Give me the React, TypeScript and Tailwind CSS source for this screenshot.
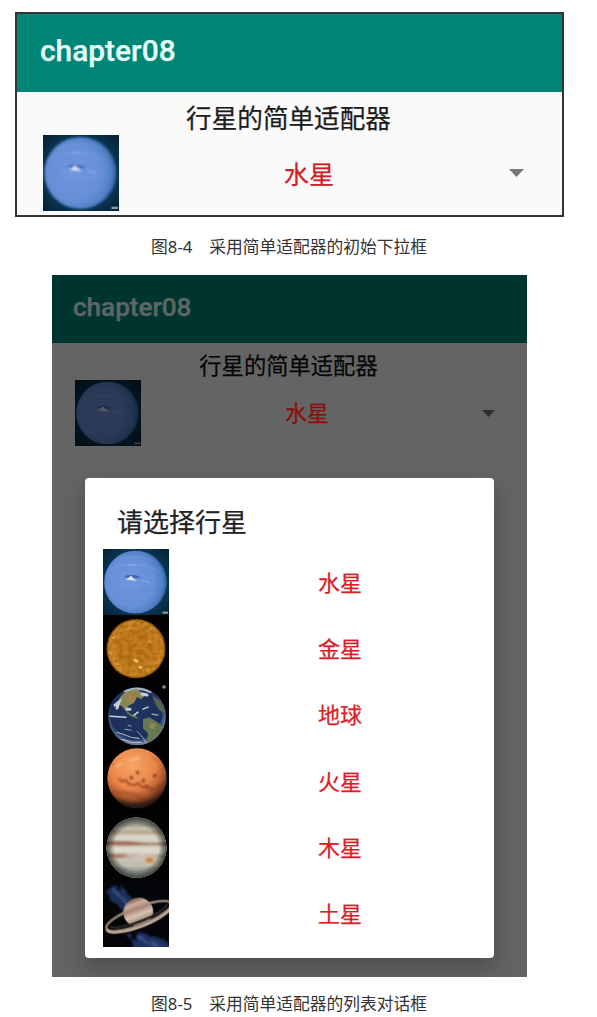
import React from "react";

const ROBOTO = "font-['Roboto','Noto_Sans_CJK_SC',sans-serif]";

function Neptune({ className }: { className: string }) {
  return (
    <svg viewBox="0 0 66 66" className={className} preserveAspectRatio="none">
      <defs>
        <radialGradient id="nepBg" cx="0.5" cy="0.5" r="0.7">
          <stop offset="0.6" stopColor="#0b3a5c" />
          <stop offset="1" stopColor="#051f30" />
        </radialGradient>
        <radialGradient id="nep" cx="0.42" cy="0.5" r="0.58">
          <stop offset="0" stopColor="#7296dd" />
          <stop offset="0.65" stopColor="#6790d8" />
          <stop offset="0.88" stopColor="#5080c4" />
          <stop offset="1" stopColor="#2e5f99" />
        </radialGradient>
        <filter id="soft1" x="-30%" y="-30%" width="160%" height="160%">
          <feGaussianBlur stdDeviation="0.7" />
        </filter>
      </defs>
      <rect width="66" height="66" fill="url(#nepBg)" />
      <circle cx="32.5" cy="33" r="31.3" fill="url(#nep)" filter="url(#soft1)" />
      <g filter="url(#soft1)" fill="none">
        <path d="M8 20Q30 9 56 22M12 12Q32 3 50 12" stroke="#8babe4" strokeWidth="1.2" opacity="0.3" />
        <path d="M21 27Q30 24 38 28Q32 30 25 29Z" fill="#3c5ca2" opacity="0.75" />
        <path d="M23 30.5L34 31.5L31 29.5L28 26.5Z" fill="#d8e7ff" />
        <path d="M25 16h8M39 31l8 2.5" stroke="#8fb0ec" strokeWidth="1.4" opacity="0.7" />
        <path d="M12 39Q30 47 52 40M15 50Q34 56 50 49" stroke="#5780ca" strokeWidth="1.5" opacity="0.25" />
      </g>
      <rect x="59.5" y="62.3" width="5.5" height="2" fill="#a9bcc9" opacity="0.8" />
    </svg>
  );
}

function Venus() {
  return (
    <svg viewBox="0 0 66 66" className="block h-full w-full" preserveAspectRatio="none">
      <defs>
        <radialGradient id="ven">
          <stop offset="0.6" stopColor="#c57a22" />
          <stop offset="0.92" stopColor="#d18a34" />
          <stop offset="1" stopColor="#6c3206" />
        </radialGradient>
        <filter id="venTex" x="0" y="0" width="100%" height="100%">
          <feTurbulence type="fractalNoise" baseFrequency="0.2" numOctaves="3" seed="8" />
          <feColorMatrix values="0 0 0 0 0.35  0 0 0 0 0.14  0 0 0 0 0  3 0 0 0 -1.1" />
          <feComposite in2="SourceGraphic" operator="in" />
        </filter>
        <filter id="soft2"><feGaussianBlur stdDeviation="0.6" /></filter>
      </defs>
      <rect width="66" height="66" fill="#050302" />
      <circle cx="33" cy="33.5" r="29.5" fill="url(#ven)" />
      <circle cx="33" cy="33.5" r="29.5" fill="#fff" filter="url(#venTex)" opacity="0.75" />
      <g stroke="#e5a13a" strokeLinecap="round" fill="none" opacity="0.7" filter="url(#soft2)">
        <path d="M10 23l2-2M14 48l2 1M24 14l4-1M44 55l2-1M46 26l2 1M6 37l2 1" strokeWidth="2" />
        <path d="M32 45l2 1M37 52l1 0" stroke="#ffe080" strokeWidth="3" />
      </g>
    </svg>
  );
}

function Earth() {
  return (
    <svg viewBox="0 0 66 66" className="block h-full w-full" preserveAspectRatio="none">
      <defs>
        <radialGradient id="ear" cx="0.48" cy="0.45" r="0.55">
          <stop offset="0" stopColor="#1f3560" />
          <stop offset="0.8" stopColor="#1b2f5a" />
          <stop offset="1" stopColor="#7591b2" />
        </radialGradient>
        <clipPath id="earClip"><circle cx="34" cy="34" r="28.5" /></clipPath>
        <filter id="soft3"><feGaussianBlur stdDeviation="0.75" /></filter>
      </defs>
      <rect width="66" height="66" fill="#020204" />
      <circle cx="34" cy="34" r="28.8" fill="url(#ear)" />
      <g clipPath="url(#earClip)">
        <g filter="url(#soft3)">
          <path d="M18 14L24 8L35 8L43 13L38 17L34 15L31 21L25 24L23 29L19 24L13 22Z" fill="#8a8656" />
          <path d="M26 13l6-2-2 7-4 3z" fill="#b07b43" />
          <path d="M23 28l5 4 4 1 4 4-3-1-5-2-4-3z" fill="#69784c" />
          <path d="M40 37L46 35L53 39L60 44L57 52L51 56L48 62L44 60L45 51L40 46Z" fill="#66784f" />
          <path d="M48 40l5 2-2 5-5-2z" fill="#92845a" />
          <path d="M49 13l9 7 4 11-6-3-4-7z" fill="#57654c" />
          <g fill="none" stroke="#c6d0da" strokeLinecap="round">
            <path d="M22 8Q34 3 47 9" strokeWidth="4" opacity="0.8" />
            <path d="M12 23l4-3-2 6M24 27l3 0M39 12l5 1" strokeWidth="3" />
            <path d="M7 34l16 1M31 33l4-3M40 27l5-2" strokeWidth="1.5" />
            <path d="M14 50l6 2 8 3 8 1M19 57l10 3 9 0M49 32l6 1" strokeWidth="1.2" opacity="0.8" />
            <path d="M34 49l4 4 5 7M25 43l3 1M22 47l6 1" strokeWidth="0.9" opacity="0.8" />
          </g>
        </g>
      </g>
      <circle cx="61" cy="5" r="1.8" fill="#8d8d8d" />
    </svg>
  );
}

function Mars() {
  return (
    <svg viewBox="0 0 66 66" className="block h-full w-full" preserveAspectRatio="none">
      <defs>
        <radialGradient id="mar" cx="0.42" cy="0.28" r="0.72">
          <stop offset="0" stopColor="#f8a566" />
          <stop offset="0.55" stopColor="#e98548" />
          <stop offset="0.78" stopColor="#a9562c" />
          <stop offset="1" stopColor="#24140e" />
        </radialGradient>
        <filter id="soft4" x="-20%" y="-20%" width="140%" height="140%">
          <feGaussianBlur stdDeviation="0.8" />
        </filter>
      </defs>
      <rect width="66" height="66" fill="#020101" />
      <circle cx="34" cy="30" r="29.7" fill="url(#mar)" />
      <g filter="url(#soft4)" stroke="#8a3a1c" fill="none" strokeLinecap="round">
        <path d="M16 31l3 2 4-1 3 4 6 1 3-2 4 4 6-1" strokeWidth="1.6" />
        <path d="M34 24l1 1M51 28l1-1M28 29l1 1M40 33l1-1" strokeWidth="2.2" stroke="#55251a" />
        <path d="M9 45Q28 42 39 50T60 38" strokeWidth="2.5" opacity="0.4" />
        <path d="M43 38l7 4 9-5" strokeWidth="3" opacity="0.7" />
        <path d="M8 15l3 2M50 10l4 3" strokeWidth="1.5" opacity="0.4" />
        <path d="M14 18l3-2M28 12l8-2" stroke="#ffc994" strokeWidth="3" opacity="0.6" />
      </g>
      <path d="M12 50Q33 61 56 48Q49 60 34 60Q20 60 12 50Z" fill="#291b17" opacity="0.7" filter="url(#soft4)" />
    </svg>
  );
}

function Jupiter() {
  return (
    <svg viewBox="0 0 66 66" className="block h-full w-full" preserveAspectRatio="none">
      <defs>
        <clipPath id="jupClip"><circle cx="33.5" cy="33.5" r="30" /></clipPath>
        <radialGradient id="jupShade">
          <stop offset="0.72" stopColor="#000" stopOpacity="0" />
          <stop offset="1" stopColor="#101510" stopOpacity="0.7" />
        </radialGradient>
        <filter id="soft5" x="-20%" y="-20%" width="140%" height="140%">
          <feGaussianBlur stdDeviation="0.9" />
        </filter>
      </defs>
      <rect width="66" height="66" fill="#030303" />
      <g clipPath="url(#jupClip)">
        <rect width="66" height="66" fill="#c8c3b6" />
        <g filter="url(#soft5)">
          <rect y="2" width="66" height="11" fill="#a6a698" />
          <rect y="16" width="66" height="4" fill="#bda78e" />
          <rect y="21" width="66" height="6" fill="#d9d4c8" />
          <path d="M0 27Q22 26 35 28T66 28v3Q44 30 32 31T0 30Z" fill="#a06f5a" />
          <rect y="33" width="66" height="6" fill="#dfd9cd" />
          <path d="M0 40Q24 38 36 41T66 40v4Q44 41 28 43T0 42Z" fill="#ac8068" />
          <path d="M22 42l6-1 6 1 7-1" stroke="#eee5d8" strokeWidth="1" fill="none" />
          <rect y="47" width="66" height="5" fill="#c0beb1" />
          <rect y="53" width="66" height="14" fill="#9da499" />
          <ellipse cx="46.5" cy="46" rx="6" ry="4" fill="#d8bd94" />
          <ellipse cx="46.5" cy="46" rx="3.8" ry="2.2" fill="#bd803b" />
        </g>
        <circle cx="33.5" cy="33.5" r="30.3" fill="url(#jupShade)" />
      </g>
    </svg>
  );
}

function Saturn() {
  return (
    <svg viewBox="0 0 66 66" className="block h-full w-full" preserveAspectRatio="none">
      <defs>
        <linearGradient id="sat" x1="0.2" y1="0" x2="0.2" y2="1">
          <stop offset="0" stopColor="#7d5b4d" />
          <stop offset="0.2" stopColor="#cbb09e" />
          <stop offset="0.38" stopColor="#a98577" />
          <stop offset="0.6" stopColor="#d5c4b3" />
          <stop offset="1" stopColor="#776658" />
        </linearGradient>
        <filter id="neb" x="-20%" y="-20%" width="140%" height="140%">
          <feTurbulence type="fractalNoise" baseFrequency="0.14" numOctaves="3" seed="5" result="n" />
          <feDisplacementMap in="SourceGraphic" in2="n" scale="16" />
          <feGaussianBlur stdDeviation="1.3" />
        </filter>
        <filter id="soft6"><feGaussianBlur stdDeviation="0.5" /></filter>
      </defs>
      <rect width="66" height="66" fill="#040509" />
      <g filter="url(#neb)">
        <path d="M5 8L20 6L31 20L29 34L21 33L16 24L6 20Z" fill="#1d2e58" />
        <path d="M27 56L42 50L52 56L64 59L68 70L32 70Z" fill="#1d3061" />
        <path d="M12 11l8 6 6 9M36 57l9 5 12 3" stroke="#3f5992" strokeWidth="2" fill="none" />
      </g>
      <g filter="url(#soft6)" transform="rotate(-21 35 33)">
        <ellipse cx="35" cy="35" rx="34.5" ry="9" fill="none" stroke="#8d7a6b" strokeWidth="2.6" />
        <ellipse cx="36" cy="31" rx="15" ry="14" fill="url(#sat)" />
        <path d="M0.5 36A34.5 9.5 0 0 0 69.5 36" fill="none" stroke="#b9a594" strokeWidth="3" />
        <path d="M5 34A30 6.5 0 0 0 65 34" fill="none" stroke="#292421" strokeWidth="2.6" />
      </g>
    </svg>
  );
}

const planets = [
  { name: "水星", art: <Neptune className="block h-full w-full" /> },
  { name: "金星", art: <Venus /> },
  { name: "地球", art: <Earth /> },
  { name: "火星", art: <Mars /> },
  { name: "木星", art: <Jupiter /> },
  { name: "土星", art: <Saturn /> },
];

function Caption({ children }: { children: React.ReactNode }) {
  return (
    <figcaption className="mr-[1px] whitespace-pre text-center font-['Noto_Sans','Noto_Sans_CJK_SC',sans-serif] text-[16.75px] leading-6 text-[#333]">
      {children}
    </figcaption>
  );
}

function SpinnerFigure() {
  return (
    <figure className="flex flex-col items-center">
      <div className={`h-[205px] w-[549px] overflow-hidden border-2 border-[#333] bg-[#fafafa] [-webkit-text-stroke:0.25px] ${ROBOTO}`}>
        <header className="flex h-[78px] items-center bg-[#018577] pb-[4px] pl-[23px] text-[29.9px] font-medium text-[#e6fffa]">
          <span className="leading-none">chapter08</span>
        </header>
        <div className="mt-[11px] mr-[2px] h-[32px] text-center text-[25.6px] leading-[32px] text-[#1c1c1c]">行星的简单适配器</div>
        <div className="flex h-[76px] items-start pl-[26px]">
          <Neptune className="h-[76px] w-[76px] shrink-0" />
          <div className="ml-[19px] h-[76px] w-[342px] pt-[2px] text-center text-[25.3px] leading-[78px] text-[#d01f27]">水星</div>
          <svg viewBox="0 0 15 8" className="mt-[34px] ml-[29px] h-[8px] w-[15px]">
            <path d="M0 0H15L7.5 8Z" fill="#777" />
          </svg>
        </div>
      </div>
      <div className="mt-[18px]"><Caption>图8-4　采用简单适配器的初始下拉框</Caption></div>
    </figure>
  );
}

function DialogFigure() {
  return (
    <figure className="flex flex-col items-center">
      <div className={`relative h-[702px] w-[475px] overflow-hidden bg-[#fafafa] [-webkit-text-stroke:0.25px] ${ROBOTO}`}>
        <header className="flex h-[68px] items-center bg-[#018577] pb-[4px] pl-[21px] text-[26.1px] font-medium text-[#e6fffa]">
          <span className="leading-none">chapter08</span>
        </header>
        <div className="mt-[10px] mr-[2px] h-[27px] text-center text-[22.3px] leading-[27px] text-[#111]">行星的简单适配器</div>
        <div className="flex h-[66px] pl-[23px]">
          <Neptune className="h-[66px] w-[66px] shrink-0" />
          <div className="relative z-10 ml-[20px] h-[66px] w-[292px] text-center text-[22px] leading-[68px] text-[#8f0c0c]">水星</div>
          <svg viewBox="0 0 13 7" className="mt-[30px] ml-[29px] h-[7px] w-[13px]">
            <path d="M0 0H13L6.5 7Z" fill="#777" />
          </svg>
        </div>
        <div className="absolute inset-0 bg-black/60" />
        <div role="dialog" className="absolute top-[203px] left-[33px] z-20 h-[480px] w-[409px] rounded-[4px] bg-white pt-[29px] pl-[18px] shadow-[0_11px_26px_rgba(0,0,0,0.24)]">
          <h2 className="h-[42px] pl-[14px] text-[26px] leading-[32px] text-[#222]">请选择行星</h2>
          <ul className="flex h-[398px] flex-col">
            {planets.map((p) => (
              <li key={p.name} className="flex min-h-0 flex-1 items-center">
                <div className="h-full w-[66px] shrink-0 bg-[#040404]">{p.art}</div>
                <span className="ml-[20px] w-[302px] pt-[3px] text-center text-[22px] leading-[30px] text-[#d91e25]">{p.name}</span>
              </li>
            ))}
          </ul>
        </div>
      </div>
      <div className="mt-[15px]"><Caption>图8-5　采用简单适配器的列表对话框</Caption></div>
    </figure>
  );
}

export default function App() {
  return (
    <main className="h-[1017px] w-[597px] overflow-hidden bg-white">
      <div className="flex w-[579px] flex-col gap-[16px] pt-[12px]">
        <SpinnerFigure />
        <DialogFigure />
      </div>
    </main>
  );
}
